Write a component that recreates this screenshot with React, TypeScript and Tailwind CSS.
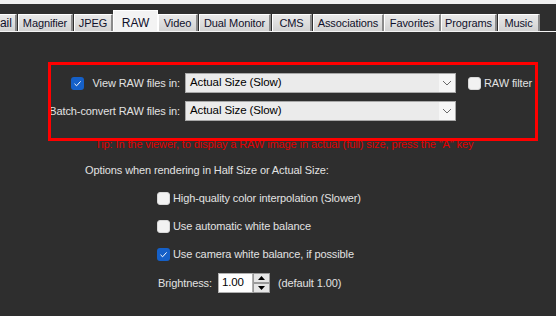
import React from "react";

const font = { fontFamily: '"Liberation Sans", Arial, sans-serif', letterSpacing: "-0.1px" };

type Tab = { label: string; w: number; gap?: number; active?: boolean };

// first tab is the tail of "Thumbnail", scrolled off the left edge
const tabs: Tab[] = [
    { label: "ail", w: 17, gap: 1 },
    { label: "Magnifier", w: 55, gap: 1 },
    { label: "JPEG", w: 39 },
    { label: "RAW", w: 45, active: true },
    { label: "Video", w: 40, gap: 1 },
    { label: "Dual Monitor", w: 72, gap: 1 },
    { label: "CMS", w: 40, gap: 1 },
    { label: "Associations", w: 71 },
    { label: "Favorites", w: 57 },
    { label: "Programs", w: 56, gap: 1 },
    { label: "Music", w: 42 },
];

function TabBar() {
    return (
        <div className="h-[28px] flex items-end border-b border-[#f4f4f4]">
            {tabs.map((t, i) => (
                <div
                    key={t.label}
                    style={{ width: t.w, marginRight: t.gap ?? 0 }}
                    className={
                        t.active
                            ? "h-[21px] shrink-0 bg-[#f3f3f3] border border-b-0 border-[#ffffff] flex items-start pt-[3px] justify-center text-[12px] text-[#10102a]"
                            : i === 0
                              ? "h-[17px] shrink-0 bg-gradient-to-b from-[#e9e9e9] to-[#d2d2d2] border-t border-t-[#ffffff] border-r-2 border-r-[#8a8a8a] flex items-center text-[12px] text-[#10102a]"
                              : "h-[17px] shrink-0 bg-gradient-to-b from-[#e9e9e9] to-[#d2d2d2] border-l border-t border-l-[#ffffff] border-t-[#ffffff] border-r-2 border-r-[#8a8a8a] flex items-center justify-center text-[11px] text-[#10102a]"
                    }
                >
                    {t.label}
                </div>
            ))}
        </div>
    );
}

function Check({ checked = false }: { checked?: boolean }) {
    if (checked) {
        return (
            <span className="w-[13px] h-[13px] shrink-0 rounded-[3px] bg-[#1560c8] flex items-center justify-center">
                <svg width="9" height="9" viewBox="0 0 9 9">
                    <path d="M1.5 4.8 L3.6 6.8 L7.6 2.4" fill="none" stroke="#ffffff" strokeWidth="1" />
                </svg>
            </span>
        );
    }
    return <span className="w-[13px] h-[13px] shrink-0 rounded-[3px] bg-[#f2f2f2] border border-[#d8d8d8]" />;
}

function Select({ value }: { value: string }) {
    return (
        <div className="w-[271px] h-[20px] border border-[#a8a8a8] bg-[#ebebeb] flex items-stretch text-[11.5px] text-[#000000]">
            <div className="flex-1 flex items-center pl-[4px]">{value}</div>
            <div className="w-[16px] bg-[#f6f6f6] flex items-center justify-center">
                <svg width="10" height="6" viewBox="0 0 10 6">
                    <path d="M1 1 L5 5 L9 1" fill="none" stroke="#6a6a6a" strokeWidth="1" />
                </svg>
            </div>
        </div>
    );
}

function Option({ label, checked }: { label: string; checked?: boolean }) {
    return (
        <div className="h-[28px] flex items-center gap-[3px] pl-[157px] text-[11px] text-[#e2e2e2]">
            <Check checked={checked} />
            <span>{label}</span>
        </div>
    );
}

export default function App() {
    return (
        <div style={font} className="relative w-[556px] h-[316px] overflow-hidden bg-[#2e2e2e]">
            <div className="h-[4px] bg-[#f0f0f0]" />
            <TabBar />

            <div className="pt-[41px]">
                <div className="h-[20px] flex items-center text-[11px] text-[#e2e2e2]">
                    <div className="w-[181px] pl-[71px] flex items-center justify-between pr-[1px]">
                        <Check checked />
                        <span>View RAW files in:</span>
                    </div>
                    <div className="ml-[4px]">
                        <Select value="Actual Size (Slow)" />
                    </div>
                    <div className="ml-[12px] flex items-center gap-[3px]">
                        <Check />
                        <span>RAW filter</span>
                    </div>
                </div>

                <div className="mt-[8px] h-[20px] flex items-center text-[11px] text-[#e2e2e2]">
                    <div className="w-[181px] flex justify-end whitespace-nowrap pr-[1px]">
                        <span>Batch-convert RAW files in:</span>
                    </div>
                    <div className="ml-[4px]">
                        <Select value="Actual Size (Slow)" />
                    </div>
                </div>

                <div className="mt-[16px] pl-[95px] text-[11px] leading-[14px] text-[#e00000]">
                    Tip: In the viewer, to display a RAW image in actual (full) size, press the "A" key
                </div>

                <div className="mt-[12px] pl-[85px] text-[11px] leading-[14px] text-[#e2e2e2]">
                    Options when rendering in Half Size or Actual Size:
                </div>

                <div className="mt-[7px]">
                    <Option label="High-quality color interpolation (Slower)" />
                    <Option label="Use automatic white balance" />
                    <Option label="Use camera white balance, if possible" checked />
                </div>

                <div className="mt-[5px] h-[20px] flex items-center pl-[158px] text-[11px] text-[#e2e2e2]">
                    <span>Brightness:</span>
                    <div className="ml-[6px] w-[35px] h-[20px] bg-[#ffffff] border border-[#b0b0b0] text-[#000000] text-[11.5px] flex items-center pl-[3px]">
                        1.00
                    </div>
                    <div className="w-[17px] h-[20px] flex flex-col">
                        <div className="h-[10px] bg-[#e6e6e6] border border-[#9a9a9a] flex items-center justify-center">
                            <svg width="7" height="4" viewBox="0 0 7 4"><path d="M0 4 L3.5 0 L7 4 Z" fill="#000" /></svg>
                        </div>
                        <div className="h-[10px] bg-[#e6e6e6] border border-[#9a9a9a] flex items-center justify-center">
                            <svg width="7" height="4" viewBox="0 0 7 4"><path d="M0 0 L3.5 4 L7 0 Z" fill="#000" /></svg>
                        </div>
                    </div>
                    <span className="ml-[8px]">(default 1.00)</span>
                </div>
            </div>

            <div className="absolute left-[48px] top-[62px] w-[490px] h-[79px] border-[3px] border-[#ff0000]" />
        </div>
    );
}
